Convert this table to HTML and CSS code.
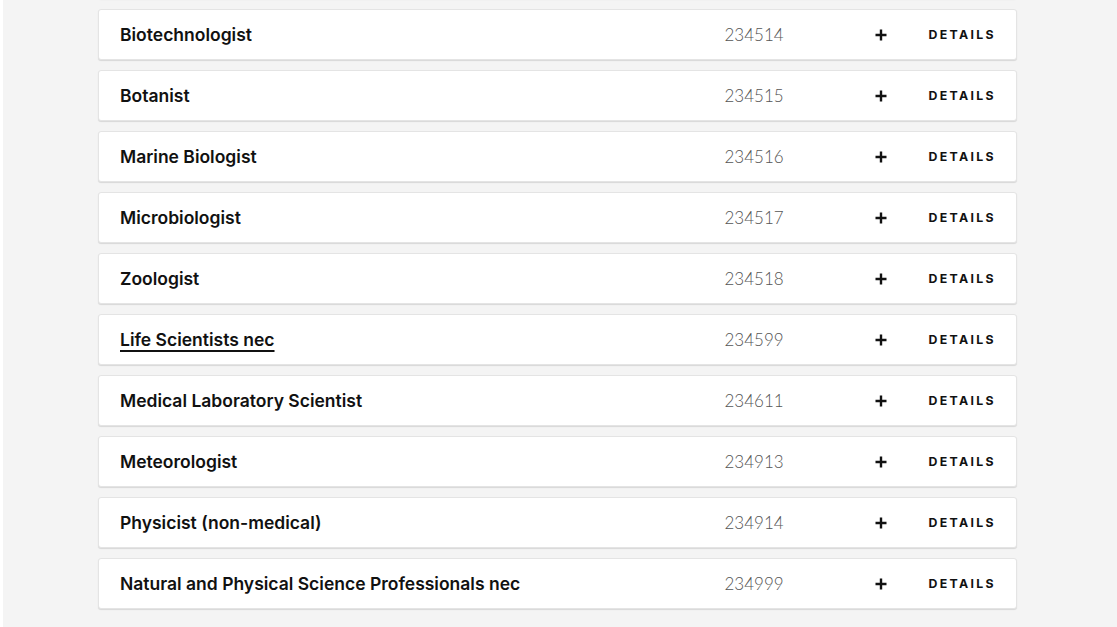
FILE: index.html
```html
<!DOCTYPE html>
<html lang="en">
<head>
<meta charset="utf-8">
<title>Occupations</title>
<link rel="stylesheet" href="styles.css">
</head>
<body>
<main class="page">
  <ul class="list">
    <li class="card prev" aria-hidden="true"></li>
    <li class="card"><span class="name">Biotechnologist</span><span class="code">234514</span><button class="add" aria-label="Add"><svg viewBox="0 0 12 12" width="12" height="12"><path d="M6 0.5v11M0.5 6h11" stroke="#111" stroke-width="2.4" fill="none"/></svg></button><a class="details" href="#">DETAILS</a></li>
    <li class="card"><span class="name">Botanist</span><span class="code">234515</span><button class="add" aria-label="Add"><svg viewBox="0 0 12 12" width="12" height="12"><path d="M6 0.5v11M0.5 6h11" stroke="#111" stroke-width="2.4" fill="none"/></svg></button><a class="details" href="#">DETAILS</a></li>
    <li class="card"><span class="name">Marine Biologist</span><span class="code">234516</span><button class="add" aria-label="Add"><svg viewBox="0 0 12 12" width="12" height="12"><path d="M6 0.5v11M0.5 6h11" stroke="#111" stroke-width="2.4" fill="none"/></svg></button><a class="details" href="#">DETAILS</a></li>
    <li class="card"><span class="name">Microbiologist</span><span class="code">234517</span><button class="add" aria-label="Add"><svg viewBox="0 0 12 12" width="12" height="12"><path d="M6 0.5v11M0.5 6h11" stroke="#111" stroke-width="2.4" fill="none"/></svg></button><a class="details" href="#">DETAILS</a></li>
    <li class="card"><span class="name">Zoologist</span><span class="code">234518</span><button class="add" aria-label="Add"><svg viewBox="0 0 12 12" width="12" height="12"><path d="M6 0.5v11M0.5 6h11" stroke="#111" stroke-width="2.4" fill="none"/></svg></button><a class="details" href="#">DETAILS</a></li>
    <li class="card"><a class="name link" href="#">Life Scientists nec</a><span class="code">234599</span><button class="add" aria-label="Add"><svg viewBox="0 0 12 12" width="12" height="12"><path d="M6 0.5v11M0.5 6h11" stroke="#111" stroke-width="2.4" fill="none"/></svg></button><a class="details" href="#">DETAILS</a></li>
    <li class="card"><span class="name">Medical Laboratory Scientist</span><span class="code">234611</span><button class="add" aria-label="Add"><svg viewBox="0 0 12 12" width="12" height="12"><path d="M6 0.5v11M0.5 6h11" stroke="#111" stroke-width="2.4" fill="none"/></svg></button><a class="details" href="#">DETAILS</a></li>
    <li class="card"><span class="name">Meteorologist</span><span class="code">234913</span><button class="add" aria-label="Add"><svg viewBox="0 0 12 12" width="12" height="12"><path d="M6 0.5v11M0.5 6h11" stroke="#111" stroke-width="2.4" fill="none"/></svg></button><a class="details" href="#">DETAILS</a></li>
    <li class="card"><span class="name">Physicist (non-medical)</span><span class="code">234914</span><button class="add" aria-label="Add"><svg viewBox="0 0 12 12" width="12" height="12"><path d="M6 0.5v11M0.5 6h11" stroke="#111" stroke-width="2.4" fill="none"/></svg></button><a class="details" href="#">DETAILS</a></li>
    <li class="card"><span class="name">Natural and Physical Science Professionals nec</span><span class="code">234999</span><button class="add" aria-label="Add"><svg viewBox="0 0 12 12" width="12" height="12"><path d="M6 0.5v11M0.5 6h11" stroke="#111" stroke-width="2.4" fill="none"/></svg></button><a class="details" href="#">DETAILS</a></li>
  </ul>
</main>
</body>
</html>
```
FILE: styles.css
```css
html, body {
  margin: 0;
  padding: 0;
  background: #ffffff;
}
body {
  font-family: "Inter", "Liberation Sans", sans-serif;
  color: #111;
  overflow: hidden;
  height: 627px;
}
.page {
  margin-left: 3px;
  background: #f4f4f4;
  height: 627px;
  padding: 0 100px 0 95px;
}
.list {
  list-style: none;
  margin: 0;
  padding: 0;
  position: relative;
  top: -52px;
  display: flex;
  flex-direction: column;
  gap: 10px;
}
.card {
  display: flex;
  align-items: center;
  height: 49px;
  background: #fff;
  border: 1px solid #e4e4e4;
  border-radius: 3px;
  box-shadow: 0 1px 1px rgba(0,0,0,0.12);
  padding: 0 20px 0 21px;
}
.name {
  flex: 1;
  font-weight: 600;
  font-size: 17.5px;
  color: #111;
  text-decoration: none;
}
.name.link {
  text-decoration: underline;
  text-underline-offset: 4px;
  text-decoration-thickness: 1.5px;
}
.code {
  width: 151px;
  font-family: "Lato", "Liberation Sans", sans-serif;
  font-weight: 300;
  font-size: 17px;
  color: #555;
}
.add {
  border: 0;
  background: none;
  padding: 0;
  margin: 0 41px 0 0;
  display: flex;
  width: 12px;
  height: 12px;
}
.details {
  font-weight: 700;
  font-size: 12.3px;
  letter-spacing: 2.35px;
  color: #111;
  text-decoration: none;
}
```
